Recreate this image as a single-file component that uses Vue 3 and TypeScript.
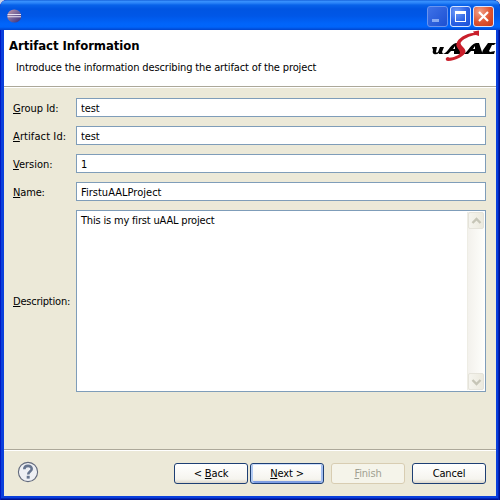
<script setup lang="ts">
import { ref } from 'vue'

interface Field { id: string; key: string; rest: string; value: string }

const fields = ref<Field[]>([
  { id: 'group', key: 'G', rest: 'roup Id:', value: 'test' },
  { id: 'artifact', key: 'A', rest: 'rtifact Id:', value: 'test' },
  { id: 'version', key: 'V', rest: 'ersion:', value: '1' },
  { id: 'name', key: 'N', rest: 'ame:', value: 'FirstuAALProject' },
])
const description = ref('This is my first uAAL project')
</script>

<template>
  <div class="window">
    <header class="titlebar">
      <svg class="app-icon" width="16" height="16" viewBox="0 0 16 16">
        <defs>
          <linearGradient id="orb" x1="0" y1="0" x2="1" y2="1">
            <stop offset="0" stop-color="#c998a4" />
            <stop offset=".45" stop-color="#7a6a9c" />
            <stop offset="1" stop-color="#34297a" />
          </linearGradient>
        </defs>
        <ellipse cx="7.3" cy="8" rx="7" ry="6.6" fill="url(#orb)" />
        <path d="M0.5 6.5H14M0.5 8.8H14" stroke="#e6e2f4" stroke-width="1.1" />
      </svg>
      <div class="controls">
        <span class="ctl minimize">
          <svg width="19" height="19" viewBox="0 0 19 19"><rect x="4" y="12" width="7" height="3" fill="#86a9f3" /></svg>
        </span>
        <span class="ctl maximize">
          <svg width="19" height="19" viewBox="0 0 19 19"><path d="M4 4h11v11H4zM5 7v7h9V7z" fill="#fff" fill-rule="evenodd" /></svg>
        </span>
        <span class="ctl close">
          <svg width="19" height="19" viewBox="0 0 19 19"><path d="M5 5l9 9M14 5l-9 9" stroke="#fff" stroke-width="2.2" /></svg>
        </span>
      </div>
    </header>

    <main class="body">
      <section class="banner">
        <div class="heading">
          <h1>Artifact Information</h1>
          <p>Introduce the information describing the artifact of the project</p>
        </div>
        <svg class="brand" width="66" height="34" viewBox="0 0 66 34">
          <g fill="#000">
            <path d="M1 17h5l-1 5q0 1 2 0l2-5h4l-2 5 1 2H8v-1q-3 2-5 1-2-1-1-4z" />
            <path fill-rule="evenodd" d="M11 24q3 0 6-4 4-6 8-7h4l2 9 2 2h-10l0-3h-3l-3 3zM22 19h2l0-3z" />
            <path fill-rule="evenodd" d="M31 24q3 0 6-4 4-6 8-7h3l3 9 2 2h-10l0-3h-3l-3 3zM42 19h2l0-3z" />
            <path d="M57 13h8l-2 2h-2l-3 6 1 1 5-1-1 3h-10q-3 0-1-4z" />
          </g>
          <path d="M48 .5v5.500l-3-1c-6 .5-14 4.500-15.500 8 0 3 5 5 5 8.500 0 4-10 9.500-17.500 9.500-3 0-3-4 0-4 1 .8 2 .8 3 .6 5-.8 9-3 9-5 0-3-4.500-5-3.500-9 1.200-5 9-10 17.500-10.800l-1-1.300z" fill="#c91f2b" />
        </svg>
      </section>

      <form class="form" @submit.prevent>
        <template v-for="f in fields" :key="f.id">
          <label :class="['label', f.id]" :for="f.id"><u>{{ f.key }}</u>{{ f.rest }}</label>
          <input :id="f.id" v-model="f.value" :class="['input', f.id]" type="text" spellcheck="false" />
        </template>
        <label class="label description" for="description"><u>D</u>escription:</label>
        <div class="area">
          <textarea id="description" v-model="description" spellcheck="false"></textarea>
          <div class="scrollbar">
            <span class="arrow"><svg width="15" height="16" viewBox="0 0 15 16"><path d="M3.5 10l4-4 4 4" /></svg></span>
            <span class="arrow"><svg width="15" height="16" viewBox="0 0 15 16"><path d="M3.5 6l4 4 4-4" /></svg></span>
          </div>
        </div>
      </form>

      <footer class="footer">
        <svg class="help" width="22" height="22" viewBox="0 0 22 22">
          <circle cx="11" cy="11" r="9.6" fill="#eef0f4" stroke="#626a7c" stroke-width="1.1" />
          <path d="M7.3 8.2C7.3 3.8 14.7 3.8 14.7 8C14.7 10.5 11.2 10.6 11.2 13.4" fill="none" stroke="#66758f" stroke-width="2.6" />
          <rect x="9.7" y="14.8" width="3" height="2.8" fill="#66758f" />
        </svg>
        <div class="buttons">
          <button type="button" class="btn back">&lt; <u>B</u>ack</button>
          <button type="button" class="btn next"><u>N</u>ext &gt;</button>
          <button type="button" class="btn finish" disabled><u>F</u>inish</button>
          <button type="button" class="btn cancel">Cancel</button>
        </div>
      </footer>
    </main>
  </div>
</template>

<style>
body { margin: 0; background: #c9d3e8; overflow: hidden; }
</style>

<style scoped>
* { box-sizing: border-box; }
.window {
  display: flex;
  flex-direction: column;
  width: 500px;
  height: 500px;
  padding: 0 4px 4px;
  border-radius: 7px 7px 0 0;
  background: #0a3fdc;
  box-shadow: inset 1px 0 #0019c5, inset -1px 0 #00128f, inset -2px 0 #0024b8, inset 0 -1px #00128f, inset 0 -2px #0024b8;
  overflow: hidden;
  font: 11px/14px "DejaVu Sans Condensed", "DejaVu Sans", sans-serif;
  font-stretch: condensed;
  color: #000;
}
.titlebar {
  flex: none;
  display: flex;
  justify-content: space-between;
  height: 30px;
  margin: 0 -4px;
  padding: 6px 6px 0 7px;
  background: linear-gradient(#0a52cf 0, #3a93ff 1px, #2a83f8 3px, #0863ea 5px, #0055e2 9px, #0057e7 16px, #0065fb 24px, #0064fa 27px, #0045ce 30px);
}
.app-icon { margin-top: 2px; }
.controls { display: flex; gap: 2px; }
.ctl {
  width: 21px;
  height: 21px;
  border: 1px solid #d8e5ff;
  border-radius: 3px;
  background: radial-gradient(circle at 30% 25%, #6f9bf8, #2c62e4 55%, #1b4fd5);
}
.ctl svg { display: block; }
.minimize { border-color: #6a94ee; background: linear-gradient(135deg, #3e72e8, #1d50d2); }
.close { background: radial-gradient(circle at 30% 25%, #f2a088, #df5330 55%, #c5391a); }
.body { flex: 1; display: flex; flex-direction: column; min-height: 0; background: #ece9d8; }
.banner {
  flex: none;
  display: flex;
  justify-content: space-between;
  height: 58px;
  background: #fff;
  border-bottom: 1px solid #fff;
  box-shadow: inset 0 -1px #aca899;
}
.heading { padding: 8px 0 0 5px; white-space: nowrap; }
h1 { margin: 0; font: bold 13px/15px "DejaVu Sans Condensed", "DejaVu Sans", sans-serif; font-stretch: condensed; letter-spacing: -.05px; }
p { margin: 8px 0 0 7px; letter-spacing: -.135px; }
.brand { flex: none; margin-right: -1px; }
.form {
  flex: none;
  display: grid;
  grid-template-columns: 63px 410px;
  grid-template-rows: repeat(4, 19px) 182px;
  row-gap: 9px;
  align-items: center;
  padding: 10px 0 0 9px;
}
.label { padding-top: 2px; white-space: nowrap; letter-spacing: -.15px; }
.label.artifact { letter-spacing: .1px; }
.label.group, .label.version { letter-spacing: -.02px; }
.label.description { letter-spacing: -.22px; }
u { text-decoration: underline; text-decoration-thickness: 1px; text-underline-offset: 1px; }
input, textarea { margin: 0; font: inherit; letter-spacing: -.15px; color: #000; outline: 0; border-radius: 0; }
.input { width: 410px; height: 19px; padding: 1px 5px 0 4px; border: 1px solid #7f9db9; background: #fff; }
.input.name { letter-spacing: .02px; }
.area { display: flex; height: 182px; border: 1px solid #7f9db9; background: #fff; }
textarea { flex: 1; padding: 3px 4px; border: 0; background: #fff; resize: none; overflow: hidden; letter-spacing: -.18px; }
.scrollbar {
  display: flex;
  flex-direction: column;
  justify-content: space-between;
  width: 17px;
  margin: 1px;
  border-left: 1px solid #eeede5;
  background: linear-gradient(90deg, #f3f1ec, #fefefb);
}
.arrow { height: 17px; border: 1px solid #e5e3da; border-radius: 2px; background: linear-gradient(90deg, #f5f4ee, #eceade); }
.arrow svg { display: block; }
.arrow path { fill: none; stroke: #c6c5b7; stroke-width: 2.4; }
.footer {
  flex: none;
  display: flex;
  justify-content: space-between;
  height: 47px;
  margin-top: auto;
  padding: 11px 10px 0 13px;
  border-top: 1px solid #aca899;
  box-shadow: inset 0 1px #fff;
}
.buttons { display: flex; padding-top: 2px; }
.btn {
  width: 74px;
  height: 21px;
  padding: 1px 0 0;
  border: 1px solid #1d3f74;
  border-radius: 3px;
  background: linear-gradient(#fff, #f5f4ee 80%, #dcd7cb);
  font: inherit;
  letter-spacing: -.15px;
  color: #000;
}
.next { margin-left: 2px; box-shadow: inset 0 1px #cfe0fd, inset 2px 0 #b2cbf3, inset -2px 0 #a3bff0, inset 0 -2px #7f9fe3; }
.finish { margin-left: 7px; border-color: #d8cdb2; background: #f5f4ea; color: #a1a192; }
.cancel { margin-left: 7px; }
</style>
